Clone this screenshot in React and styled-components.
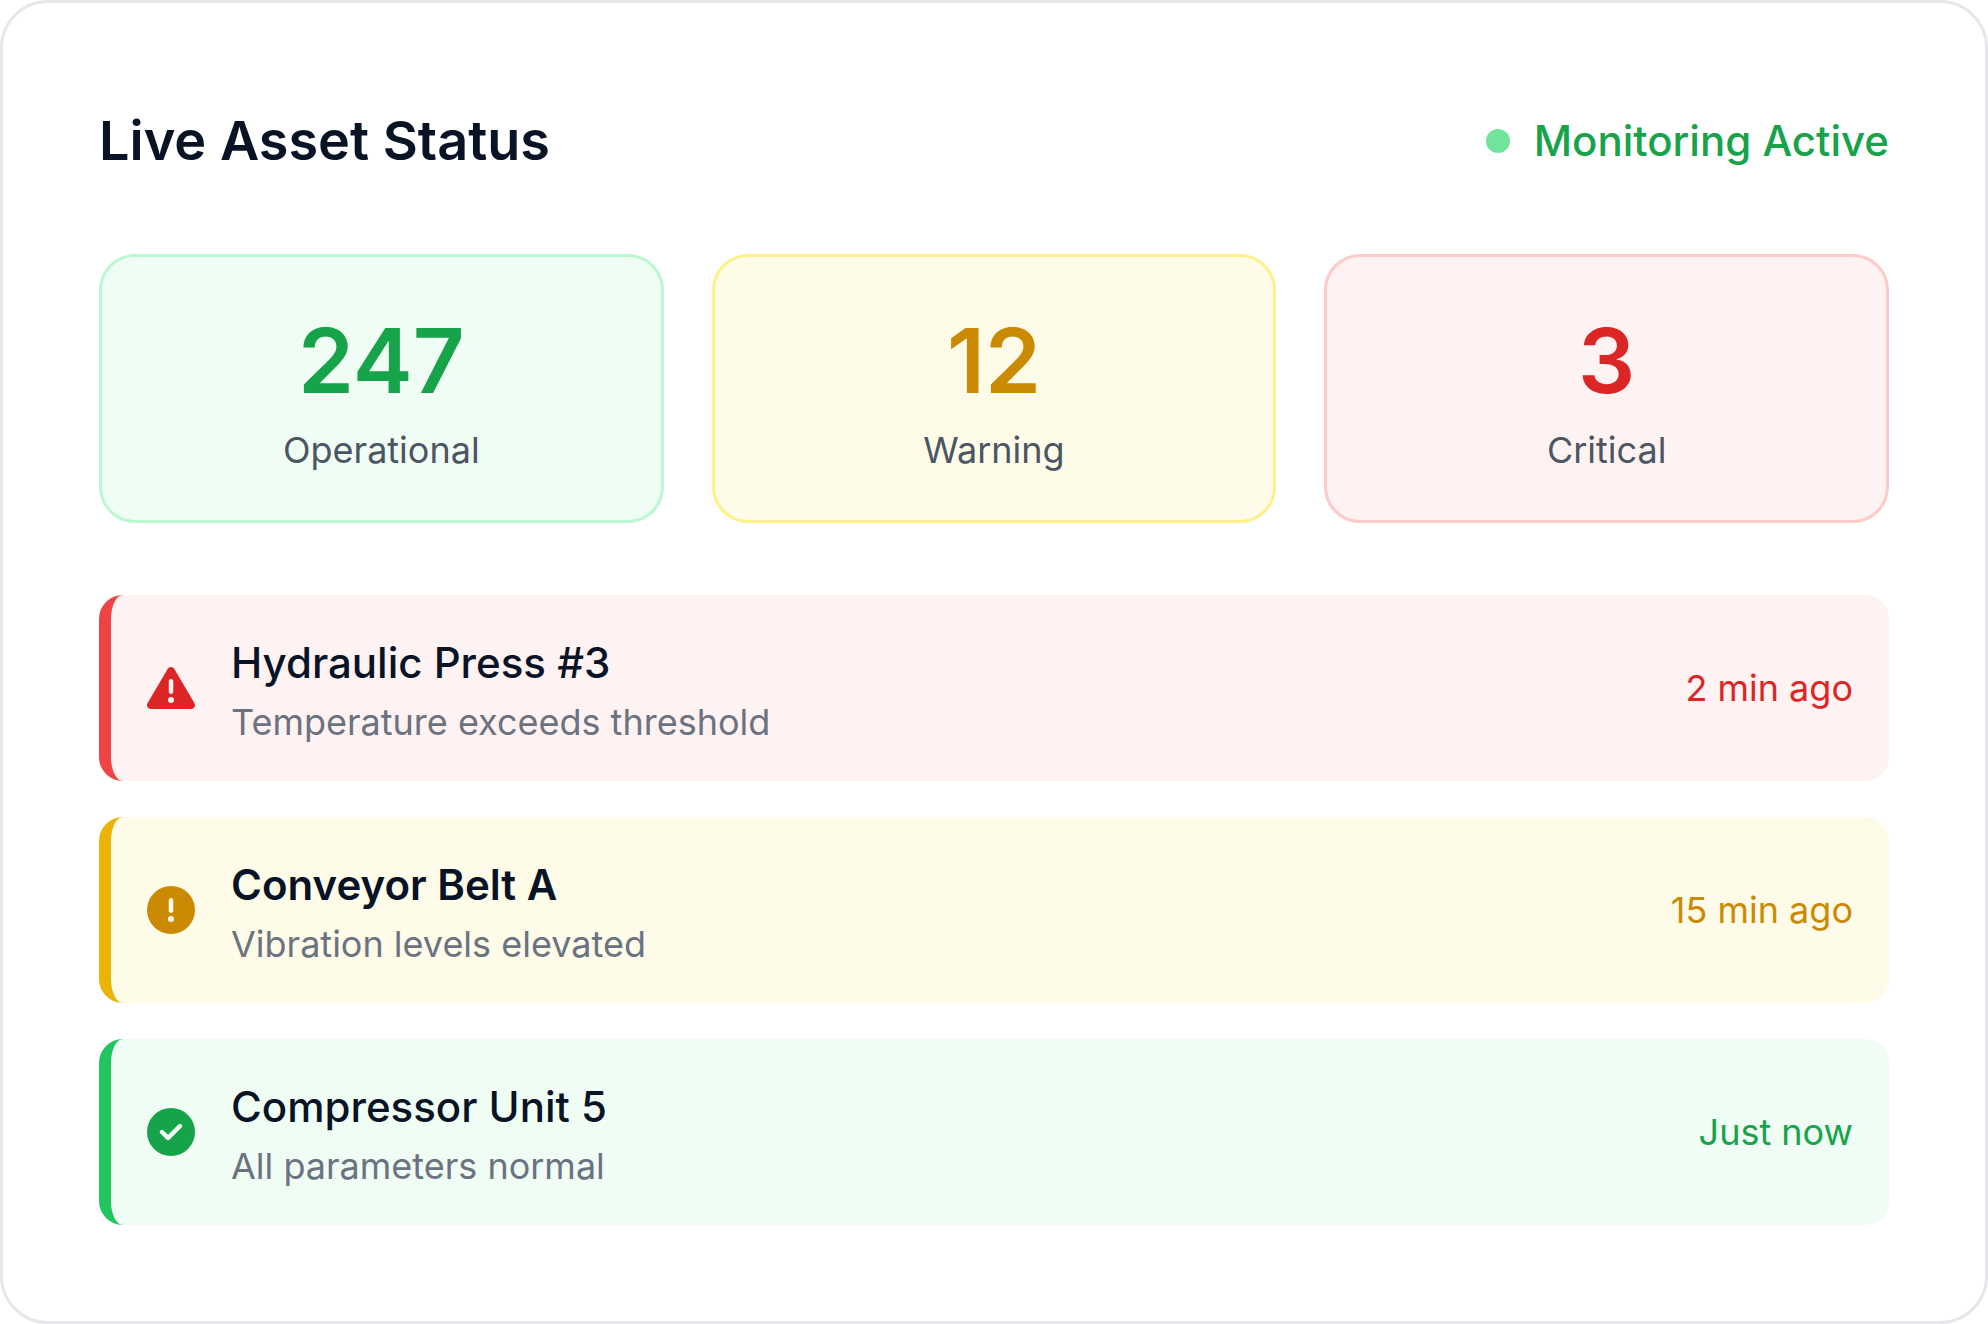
import React from 'react'
import styled, { createGlobalStyle } from 'styled-components'
import { FaTriangleExclamation, FaCircleExclamation, FaCircleCheck } from 'react-icons/fa6'

const GlobalStyle = createGlobalStyle`
  * {
    box-sizing: border-box;
  }
  body {
    margin: 0;
    background-color: white;
    font-family: Inter, "Liberation Sans", sans-serif;
  }
`

const tones = {
  green: { text: '#16a34a', background: '#f0fdf4', border: '#bbf7d0', accent: '#22c55e' },
  yellow: { text: '#ca8a04', background: '#fefce8', border: '#fef08a', accent: '#eab308' },
  red: { text: '#dc2626', background: '#fef2f2', border: '#fecaca', accent: '#ef4444' }
}

const Card = styled.section`
  width: 100%;
  padding: 96px;
  border: 3px solid #e5e7eb;
  border-radius: 48px;
  background-color: white;
`

const Header = styled.header`
  display: flex;
  align-items: center;
  justify-content: space-between;
  margin-bottom: 71px;
`

const Title = styled.h2`
  margin: 0;
  font-size: 54px;
  font-weight: 600;
  line-height: 84px;
  color: #081426;
`

const Monitoring = styled.div`
  display: flex;
  align-items: center;
  gap: 24px;
  font-size: 42px;
  font-weight: 500;
  line-height: 60px;
  color: #16a34a;
`

const Dot = styled.span`
  width: 24px;
  height: 24px;
  border-radius: 50%;
  background-color: #70e49b;
`

const Stats = styled.div`
  display: grid;
  grid-template-columns: repeat(3, 1fr);
  gap: 48px;
  margin-bottom: 72px;
`

const Stat = styled.div`
  display: flex;
  flex-direction: column;
  align-items: center;
  gap: 11px;
  padding: 50px 48px 46px;
  border: 3px solid ${({ $tone }) => tones[$tone].border};
  border-radius: 36px;
  background-color: ${({ $tone }) => tones[$tone].background};
`

const StatValue = styled.div`
  font-size: 90px;
  font-weight: 600;
  line-height: 108px;
  color: ${({ $tone }) => tones[$tone].text};
`

const StatLabel = styled.div`
  font-size: 36px;
  line-height: 48px;
  color: #4b5563;
`

const AlertList = styled.ul`
  display: flex;
  flex-direction: column;
  gap: 36px;
  margin: 0;
  padding: 0;
  list-style: none;
`

const Alert = styled.li`
  display: flex;
  align-items: center;
  gap: 36px;
  padding: 36px;
  border-left: 12px solid ${({ $tone }) => tones[$tone].accent};
  border-radius: 24px;
  background-color: ${({ $tone }) => tones[$tone].background};
  color: ${({ $tone }) => tones[$tone].text};
  & > svg {
    flex: none;
    width: 48px;
    height: 48px;
  }
`

const AlertText = styled.div`
  display: flex;
  flex: 1;
  flex-direction: column;
  gap: 6px;
  padding-top: 2px;
`

const AlertName = styled.h3`
  margin: 0;
  font-size: 42px;
  font-weight: ${({ $strong }) => ($strong ? 600 : 500)};
  line-height: 60px;
  color: #081426;
`

const AlertDetail = styled.p`
  margin: 0;
  font-size: 36px;
  line-height: 46px;
  color: #6b7280;
`

const AlertTime = styled.span`
  font-size: 36px;
  line-height: 48px;
`

const stats = [
  { value: 247, label: 'Operational', tone: 'green' },
  { value: 12, label: 'Warning', tone: 'yellow' },
  { value: 3, label: 'Critical', tone: 'red' }
]

const alerts = [
  { name: 'Hydraulic Press #3', detail: 'Temperature exceeds threshold', time: '2 min ago', tone: 'red', Icon: FaTriangleExclamation },
  { name: 'Conveyor Belt A', detail: 'Vibration levels elevated', time: '15 min ago', tone: 'yellow', Icon: FaCircleExclamation, strong: true },
  { name: 'Compressor Unit 5', detail: 'All parameters normal', time: 'Just now', tone: 'green', Icon: FaCircleCheck }
]

export default function App() {
  return (
    <>
      <GlobalStyle />
      <Card>
        <Header>
          <Title>Live Asset Status</Title>
          <Monitoring>
            <Dot />
            <span>Monitoring Active</span>
          </Monitoring>
        </Header>
        <Stats>
          {stats.map(({ value, label, tone }) => (
            <Stat key={label} $tone={tone}>
              <StatValue $tone={tone}>{value}</StatValue>
              <StatLabel>{label}</StatLabel>
            </Stat>
          ))}
        </Stats>
        <AlertList>
          {alerts.map(({ name, detail, time, tone, Icon, strong }) => (
            <Alert key={name} $tone={tone}>
              <Icon aria-hidden="true" />
              <AlertText>
                <AlertName $strong={strong}>{name}</AlertName>
                <AlertDetail>{detail}</AlertDetail>
              </AlertText>
              <AlertTime>{time}</AlertTime>
            </Alert>
          ))}
        </AlertList>
      </Card>
    </>
  )
}
